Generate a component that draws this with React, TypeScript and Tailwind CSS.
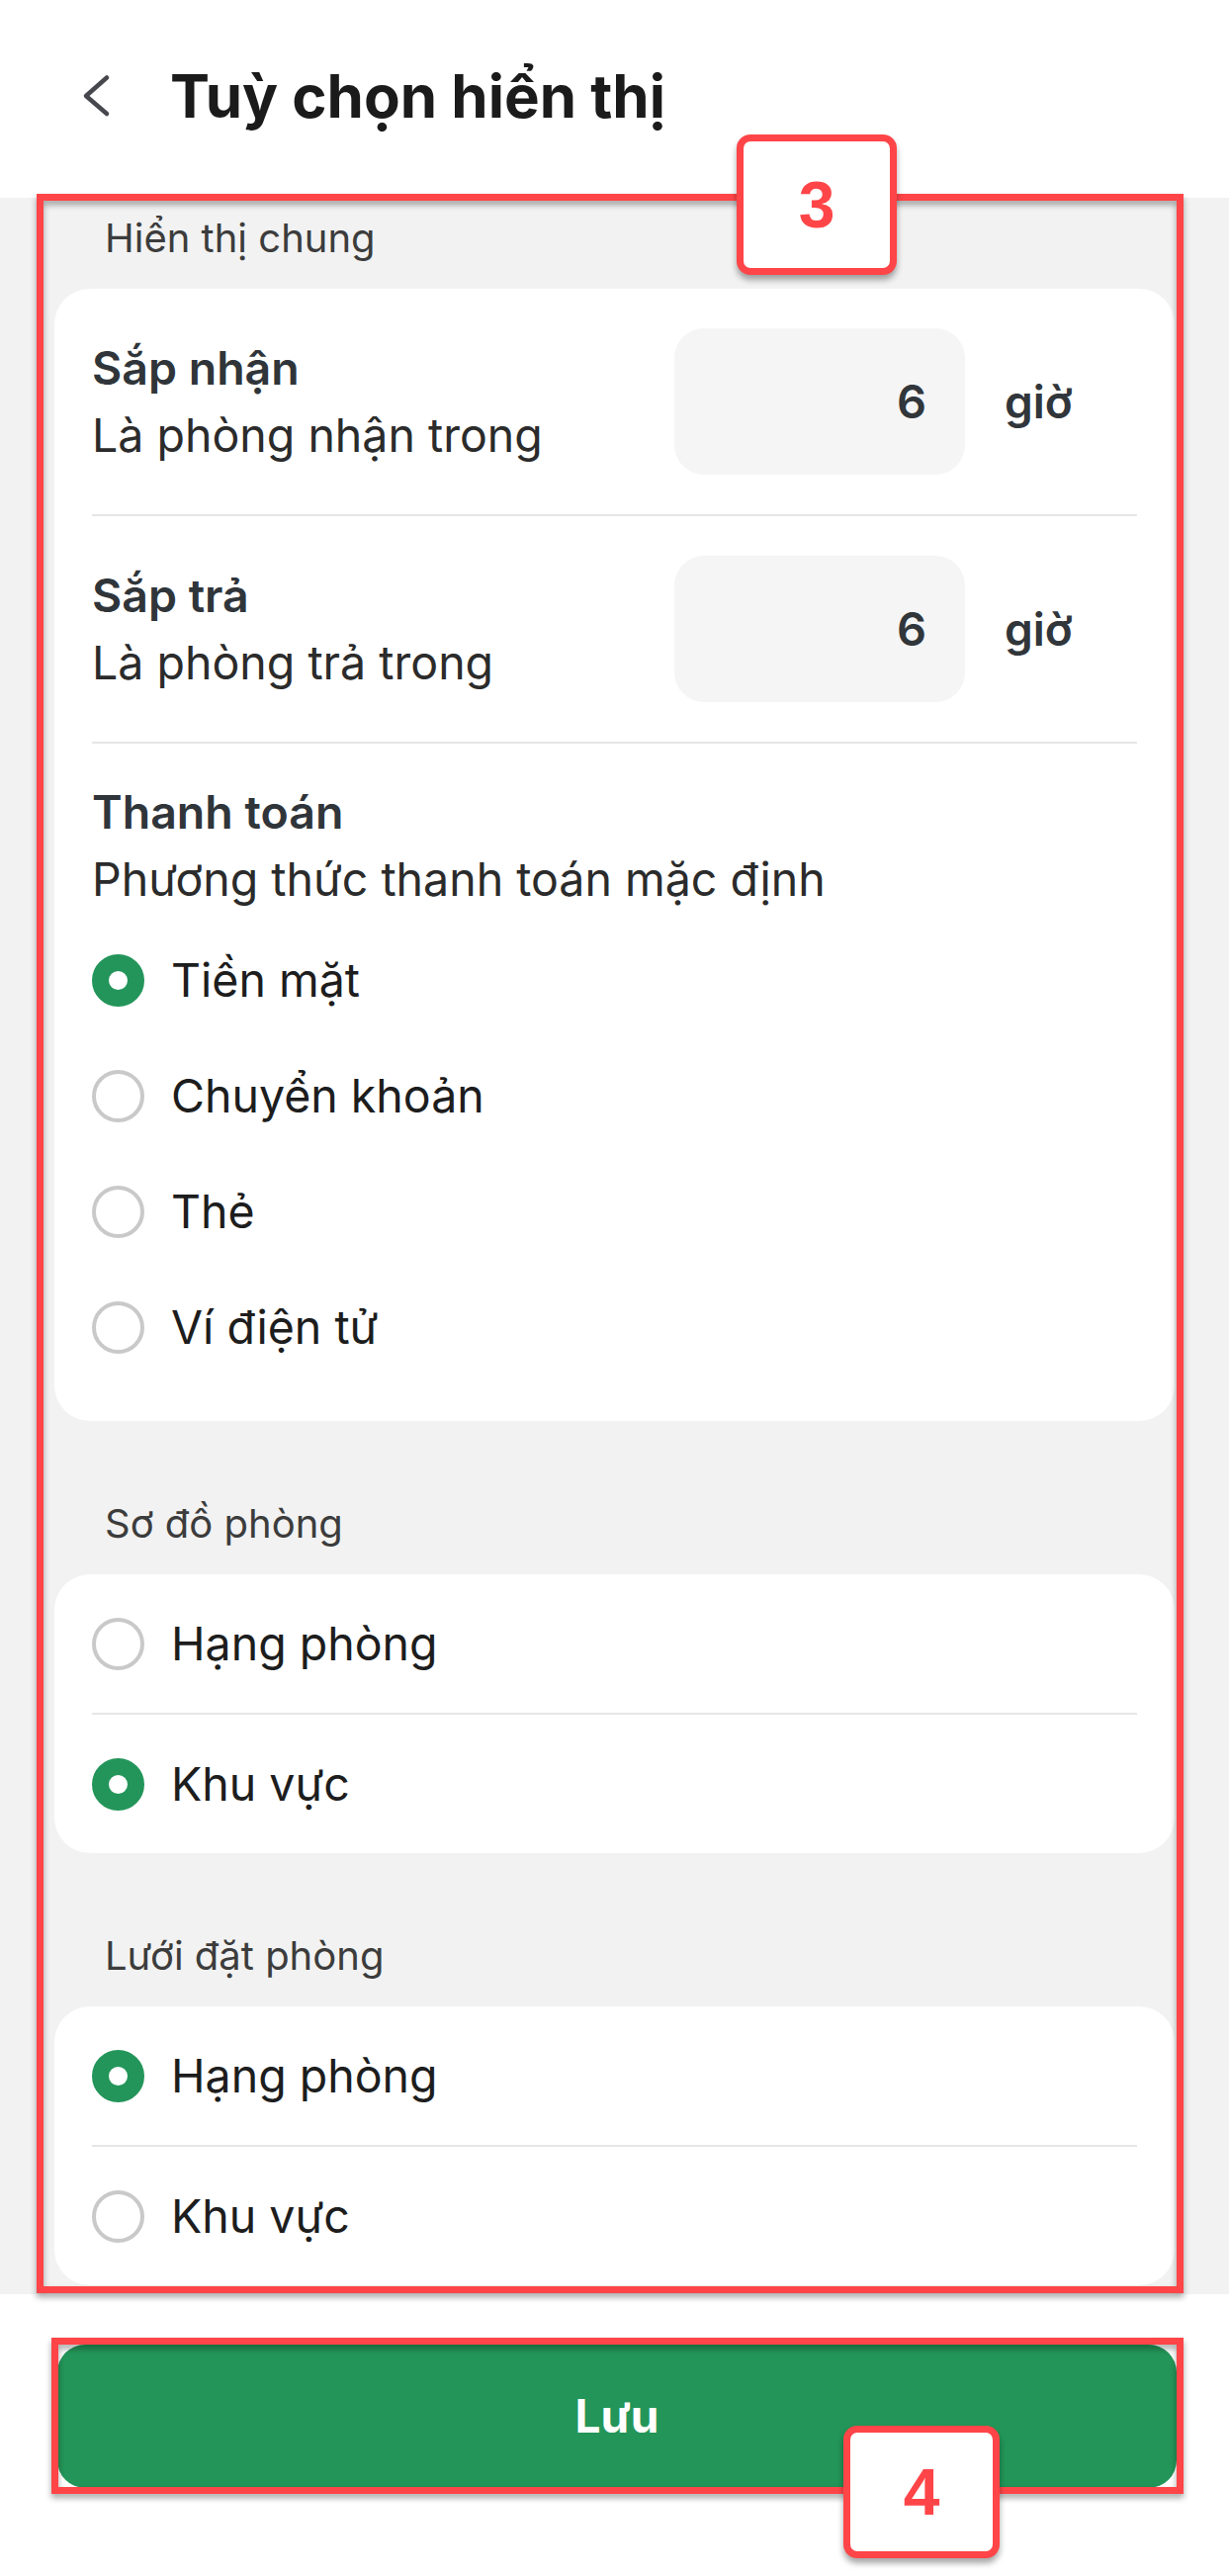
import React from "react";

function Radio({ checked }: { checked: boolean }) {
  return checked ? (
    <div className="w-[53px] h-[53px] shrink-0 rounded-full border-[17px] border-[#23955a] bg-white" />
  ) : (
    <div className="w-[53px] h-[53px] shrink-0 rounded-full border-[4px] border-[#c9c9c9] bg-white" />
  );
}

function RadioRow({ label, checked, h }: { label: string; checked: boolean; h: string }) {
  return (
    <div className={`flex items-center ${h}`}>
      <Radio checked={checked} />
      <span className="ml-[27px] text-[46.5px] leading-none text-[#1d1d1d]">{label}</span>
    </div>
  );
}

function Divider() {
  return <div className="h-[2px] bg-[#e6e6e6]" />;
}

function HourRow({ title, sub }: { title: string; sub: string }) {
  return (
    <div className="flex items-center justify-between py-[40px]">
      <div className="flex flex-col">
        <span className="text-[46.5px] leading-[68px] font-semibold text-[#30353a]">{title}</span>
        <span className="text-[46.5px] leading-[68px] text-[#2b2b2b]">{sub}</span>
      </div>
      <div className="flex items-center">
        <div className="w-[294px] h-[148px] rounded-[30px] bg-[#f5f5f6] flex items-center justify-end pr-[39px] text-[47px] font-semibold text-[#31363b]">
          6
        </div>
        <div className="w-[174px] pl-[40px] text-[46px] font-semibold text-[#31363b]">giờ</div>
      </div>
    </div>
  );
}

function SectionLabel({ text }: { text: string }) {
  return (
    <div className="pl-[106px] h-[50px] leading-[50px] text-[40px] text-[#3c3c3c] mb-[26px]">{text}</div>
  );
}

export default function App() {
  return (
    <div className="relative w-[1243px] h-[2605px] bg-white overflow-hidden font-['Inter','Noto_Sans',sans-serif]">
      {/* Header */}
      <div className="h-[200px] flex items-center pb-[6px]">
        <svg className="ml-[82px] shrink-0" width="32" height="44" viewBox="0 0 32 44" fill="none">
          <polyline points="26,3.5 5,22 26,40" stroke="#46484e" strokeWidth="4.5" strokeLinecap="round" strokeLinejoin="round" />
        </svg>
        <h1 className="ml-[58px] text-[60px] leading-none font-bold text-[#1b1b1b]">Tuỳ chọn hiển thị</h1>
      </div>

      {/* Scroll area */}
      <div className="h-[2120px] bg-[#f2f2f2] overflow-hidden pt-[16px]">
        <SectionLabel text="Hiển thị chung" />
        <div className="ml-[55px] w-[1133px] bg-white rounded-[36px] px-[38px]">
          <HourRow title="Sắp nhận" sub="Là phòng nhận trong" />
          <Divider />
          <HourRow title="Sắp trả" sub="Là phòng trả trong" />
          <Divider />
          <div className="pt-[35px] pb-[36px]">
            <div className="text-[46.5px] leading-[68px] font-semibold text-[#30353a]">Thanh toán</div>
            <div className="text-[46.5px] leading-[68px] text-[#2b2b2b]">Phương thức thanh toán mặc định</div>
            <div className="mt-[10px]">
              <RadioRow label="Tiền mặt" checked h="h-[117px]" />
              <RadioRow label="Chuyển khoản" checked={false} h="h-[117px]" />
              <RadioRow label="Thẻ" checked={false} h="h-[117px]" />
              <RadioRow label="Ví điện tử" checked={false} h="h-[117px]" />
            </div>
          </div>
        </div>

        <div className="mt-[79px]">
          <SectionLabel text="Sơ đồ phòng" />
          <div className="ml-[55px] w-[1133px] bg-white rounded-[36px] px-[38px]">
            <RadioRow label="Hạng phòng" checked={false} h="h-[140px]" />
            <Divider />
            <RadioRow label="Khu vực" checked h="h-[140px]" />
          </div>
        </div>

        <div className="mt-[79px]">
          <SectionLabel text="Lưới đặt phòng" />
          <div className="ml-[55px] w-[1133px] bg-white rounded-[36px] px-[38px]">
            <RadioRow label="Hạng phòng" checked h="h-[140px]" />
            <Divider />
            <RadioRow label="Khu vực" checked={false} h="h-[140px]" />
          </div>
        </div>
      </div>

      {/* Bottom button */}
      <div className="pt-[51px]">
        <button className="ml-[58px] w-[1132px] h-[145px] rounded-[28px] bg-[#239558] flex items-center justify-center text-[46px] font-bold text-white">
          Lưu
        </button>
      </div>

      {/* Annotation overlays */}
      <div className="absolute left-[37px] top-[196px] w-[1160px] h-[2123px] border-[7px] border-[#ff4548] drop-shadow-[0_4px_3px_rgba(0,0,0,0.35)]" />
      <div className="absolute left-[745px] top-[136px] w-[162px] h-[142px] border-[7px] border-[#ff4548] rounded-[14px] bg-white shadow-[0_5px_6px_rgba(0,0,0,0.35)] flex items-center justify-center">
        <span className="text-[66px] leading-none font-bold text-[#ff4548] font-['Liberation_Sans',Arial,sans-serif]">3</span>
      </div>
      <div className="absolute left-[52px] top-[2364px] w-[1145px] h-[158px] border-[7px] border-[#ff4548] drop-shadow-[0_4px_3px_rgba(0,0,0,0.35)]" />
      <div className="absolute left-[853px] top-[2453px] w-[158px] h-[134px] border-[7px] border-[#ff4548] rounded-[14px] bg-white shadow-[0_5px_6px_rgba(0,0,0,0.35)] flex items-center justify-center">
        <span className="text-[66px] leading-none font-bold text-[#ff4548] font-['Liberation_Sans',Arial,sans-serif]">4</span>
      </div>
    </div>
  );
}
